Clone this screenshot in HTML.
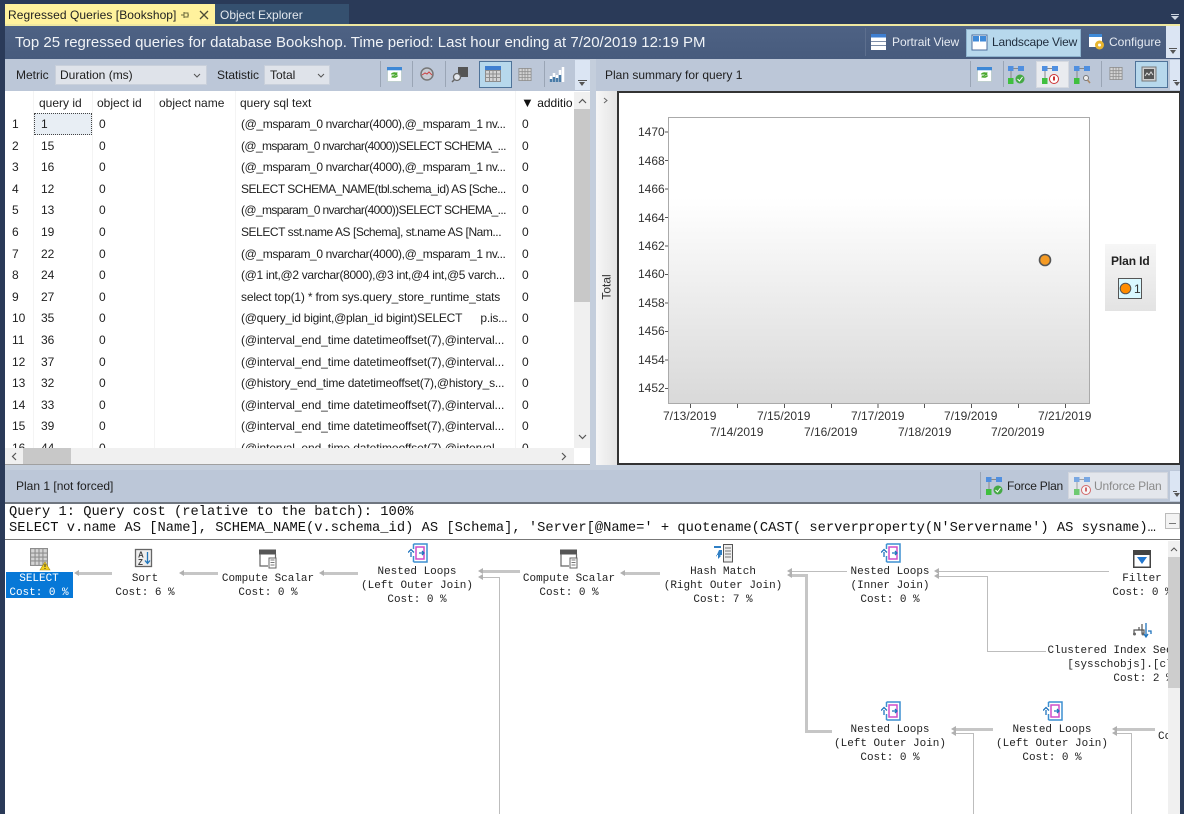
<!DOCTYPE html>
<html><head><meta charset="utf-8"><style>
html,body{margin:0;padding:0;width:1184px;height:814px;overflow:hidden;background:#2a3a58}
*{box-sizing:border-box}
body{font-family:"Liberation Sans",sans-serif;font-size:12px;color:#1e1e1e;position:relative}
.a{position:absolute;white-space:nowrap}
.sep{position:absolute;width:1px;background:#9aa5b5}
.of{position:absolute;background:#dbe5f3}
.of:after{content:"";position:absolute;left:3px;right:3px;bottom:9px;border-top:1px solid #555;height:0}
.of:before{content:"";position:absolute;left:4px;bottom:4px;border:3px solid transparent;border-top:4px solid #555;border-bottom:0}
.r{position:relative;height:21.6px;line-height:21px;overflow:hidden;white-space:nowrap}
.r span{position:absolute;top:0}
.c0{left:7px}.c1{left:36px}.c2{left:94px}.c3{left:236px}.c4{left:517px}
.s1{letter-spacing:-.38px}.s2{letter-spacing:-.62px}.s3{letter-spacing:-.5px}.s4{letter-spacing:-.45px}.s5{letter-spacing:-.33px}.s6{letter-spacing:-.18px}.s7{letter-spacing:-.25px}.s8{letter-spacing:-.1px}.s9{letter-spacing:-.22px}
.m{position:absolute;font-family:"Liberation Mono",monospace;font-size:10.98px;line-height:14px;white-space:pre;text-align:center;color:#222;transform:translateX(-50%)}
.l{position:absolute;background:#bdbdbd}
.k{position:absolute;height:3px;background:#c6c6c6}
.h:before{content:"";position:absolute;left:-5px;top:-2px;border-style:solid;border-width:3.500px 5px 3.500px 0;border-color:transparent #b0b0b0 transparent transparent}
.l.h:before{top:-3px}
.t{position:absolute;font-size:12px;color:#333;white-space:nowrap}
svg.i{position:absolute;overflow:visible}
</style></head><body>
<svg width="0" height="0" style="position:absolute"><defs>
<symbol id="nl" viewBox="0 0 20 20"><path d="M5.5 1h13.5v18h-13.500" fill="#fff" stroke="#3d8fd1" stroke-width="1.500"/><path d="M5.500 1v5M5.500 13v6" stroke="#3d8fd1" stroke-width="1.500"/><path d="M8 4h8v12h-8z" fill="#fff" stroke="#cf4fc9" stroke-width="1.500"/><path d="M0 9.500l3-3 3 3M3 9v5M11 10h5M14 8l2 2-2 2" fill="none" stroke="#1f74bd" stroke-width="1.300"/></symbol>
<symbol id="cs" viewBox="0 0 18 20"><path d="M.5 1h16v4h-16z" fill="#555" stroke="#555"/><path d="M1 5v12h8M16.500 5v4" fill="none" stroke="#666" stroke-width="1.200"/><rect x="10" y="9" width="7" height="10" fill="#fff" stroke="#666"/><path d="M11.500 11h4M11.500 13.500h4M11.500 16h4" stroke="#777"/></symbol>
<symbol id="gr" viewBox="0 0 16 16"><rect x=".5" y=".5" width="15" height="15" fill="#d4d4d4" stroke="#8d8d8d"/><path d="M.5 4.500h15M.5 8h15M.5 11.500h15M4.500 .5v15M8 .5v15M11.500 .5v15" stroke="#8f8f8f"/></symbol>
<symbol id="rf" viewBox="0 0 16 16"><rect x=".5" y=".5" width="15" height="15" fill="#fff" stroke="#bcc"/><rect x="0" y="0" width="16" height="3.500" fill="#3d88d6"/><path d="M4 8a4 3 0 0 1 6-2l1-1v4H7l1.500-1M12 9a4 3 0 0 1-6 2l-1 1V9h4l-1.500 1" fill="#4aa82f"/></symbol>
<symbol id="pl" viewBox="0 0 17 18"><rect x="0" y="0" width="5.500" height="5" fill="#4f8fe0"/><rect x="10" y="0" width="6" height="5" fill="#4f8fe0"/><path d="M5.500 2.500h4.500M3 5v8" stroke="#888"/><rect x="0" y="12" width="5.500" height="6" fill="#3fbf3f"/></symbol>
</defs></svg>

<!-- tabs -->
<div class="a" style="left:5px;top:4px;width:210px;height:21px;background:#fff29d;line-height:22px;padding-left:3px;color:#222;letter-spacing:.06px">Regressed Queries [Bookshop]</div>
<svg class="i" style="left:180px;top:10px" width="10" height="10"><path d="M1 5h3M4 2v6M4 3h4v4H4M8 5h1" stroke="#6b6a3a" fill="none"/></svg>
<svg class="i" style="left:199px;top:10px" width="10" height="10"><path d="M1 1l8 8M9 1l-8 8" stroke="#4d4d36" stroke-width="1.300"/></svg>
<div class="a" style="left:215px;top:4px;width:134px;height:20px;background:#35506f;line-height:22px;padding-left:5px;color:#e3e8ee">Object Explorer</div>
<svg class="i" style="left:1170px;top:14px" width="10" height="6"><path d="M1 0h8v1H1zM1 2h8L5 6z" fill="#cdd5e0"/></svg>
<div class="a" style="left:5px;top:24px;width:1175px;height:2px;background:#efe8a0"></div>

<!-- header -->
<div class="a" style="left:5px;top:26px;width:1175px;height:33px;background:linear-gradient(#4e6284,#475b7d)"></div>
<div class="a" style="left:15px;top:33px;font-size:15px;line-height:20px;color:#f0f3f7">Top 25 regressed queries for database Bookshop. Time period: Last hour ending at 7/20/2019 12:19 PM</div>
<div class="sep" style="left:865px;top:28px;height:28px;background:#5d6f8e"></div>
<svg class="i" style="left:871px;top:34px" width="15" height="16"><rect width="15" height="16" fill="#fff"/><rect width="15" height="3.500" fill="#3f7fd1"/><path d="M0 7.500h15M0 11.500h15" stroke="#7d8ea8"/></svg>
<div class="a" style="left:892px;top:35px;line-height:14px;color:#e6ebf2;letter-spacing:-.05px">Portrait View</div>
<div class="a" style="left:966px;top:29px;width:115px;height:28px;background:#b7d8ec;border:1px solid #8eb4cf"></div>
<svg class="i" style="left:972px;top:35px" width="15" height="15"><rect width="15" height="15" fill="#fff" stroke="#4c6e9c"/><rect x="1" y="1" width="6" height="5.500" fill="#3f8ad8"/><rect x="8" y="1" width="6" height="5.500" fill="#3f8ad8"/></svg>
<div class="a" style="left:992px;top:35px;line-height:14px;color:#1f2d3d;letter-spacing:-.2px">Landscape View</div>
<svg class="i" style="left:1089px;top:34px" width="16" height="16"><rect width="13" height="13" fill="#fff"/><rect width="13" height="3" fill="#3f8ad8"/><circle cx="10.500" cy="11" r="4.500" fill="#e8b52f"/><circle cx="10.500" cy="11" r="1.500" fill="#fff"/></svg>
<div class="a" style="left:1109px;top:35px;line-height:14px;color:#e6ebf2">Configure</div>
<div class="of" style="left:1166px;top:26px;width:14px;height:32px"></div>

<!-- left toolbar -->
<div class="a" style="left:5px;top:59px;width:585px;height:32px;background:#bcc7d8"></div>
<div class="a" style="left:16px;top:68px;line-height:14px">Metric</div>
<div class="a" style="left:55px;top:65px;width:152px;height:20px;background:#dfe3ea;border:1px solid #c9d0db;line-height:18px;padding-left:4px">Duration (ms)</div>
<svg class="i" style="left:193px;top:73px" width="8" height="5"><path d="M1 1l3 3 3-3" stroke="#555" fill="none"/></svg>
<div class="a" style="left:217px;top:68px;line-height:14px">Statistic</div>
<div class="a" style="left:264px;top:65px;width:66px;height:20px;background:#dfe3ea;border:1px solid #c9d0db;line-height:18px;padding-left:5px">Total</div>
<svg class="i" style="left:317px;top:73px" width="8" height="5"><path d="M1 1l3 3 3-3" stroke="#555" fill="none"/></svg>
<div class="sep" style="left:380px;top:61px;height:26px"></div>
<svg class="i" style="left:387px;top:67px" width="15" height="15"><use href="#rf"/></svg>
<div class="sep" style="left:412px;top:61px;height:26px"></div>
<svg class="i" style="left:420px;top:67px" width="14" height="14"><circle cx="7" cy="7" r="6" fill="#c8ccd3" stroke="#777" stroke-width="1.500"/><path d="M2 8l3-2 2 1 2-2 3 3" stroke="#c44" fill="none"/></svg>
<div class="sep" style="left:445px;top:61px;height:26px"></div>
<svg class="i" style="left:452px;top:67px" width="16" height="15"><rect x="6" y="0" width="10" height="10" fill="#555"/><circle cx="5" cy="10" r="3.500" fill="#e4e8ee" stroke="#666" stroke-width="1.300"/><path d="M2.500 12.500L0 15" stroke="#666" stroke-width="1.500"/></svg>
<div class="a" style="left:479px;top:61px;width:33px;height:27px;background:#b7d8ec;border:1px solid #4f7399"></div>
<svg class="i" style="left:485px;top:66px" width="16" height="16"><use href="#gr"/><rect width="16" height="4" fill="#3f7fd1"/></svg>
<svg class="i" style="left:518px;top:68px" width="14" height="13"><use href="#gr"/></svg>
<div class="sep" style="left:544px;top:61px;height:26px"></div>
<svg class="i" style="left:550px;top:67px" width="16" height="15"><path d="M1 15V9M4 15V6M7 15V8M10 15V3M13 15V0" stroke="#fff" stroke-width="2.500"/><path d="M1 15v-3M4 15v-5M7 15v-4M10 15V8" stroke="#4a7ca8" stroke-width="2.500"/></svg>
<div class="of" style="left:575px;top:60px;width:15px;height:30px"></div>

<!-- grid -->
<div class="a" style="left:5px;top:91px;width:585px;height:374px;background:#fff;overflow:hidden">
 <div style="position:absolute;left:0;top:1px;width:569px;height:21px;line-height:22px">
  <span class="a" style="left:34px">query id</span><span class="a" style="left:92px">object id</span><span class="a" style="left:154px">object name</span><span class="a" style="left:235px">query sql text</span><span class="a" style="left:516px;color:#111"><span style="font-size:13px">▼</span> additio</span>
 </div>
 <div style="position:absolute;left:28px;top:0;width:1px;height:357px;background:#f4f4f4"></div>
 <div style="position:absolute;left:87px;top:0;width:1px;height:357px;background:#f4f4f4"></div>
 <div style="position:absolute;left:149px;top:0;width:1px;height:357px;background:#f4f4f4"></div>
 <div style="position:absolute;left:230px;top:0;width:1px;height:357px;background:#f4f4f4"></div>
 <div style="position:absolute;left:510px;top:0;width:1px;height:357px;background:#f4f4f4"></div>
 <div style="position:absolute;left:29px;top:22px;width:58px;height:22px;background:#e8eef4;border:1px dotted #444"></div>
 <div style="position:absolute;left:0;top:23px;width:569px;height:334px;overflow:hidden">
  <div class="r"><span class="c0">1</span><span class="c1">1</span><span class="c2">0</span><span class="c3 s1">(@_msparam_0 nvarchar(4000),@_msparam_1 nv...</span><span class="c4">0</span></div>
  <div class="r"><span class="c0">2</span><span class="c1">15</span><span class="c2">0</span><span class="c3 s2">(@_msparam_0 nvarchar(4000))SELECT SCHEMA_...</span><span class="c4">0</span></div>
  <div class="r"><span class="c0">3</span><span class="c1">16</span><span class="c2">0</span><span class="c3 s1">(@_msparam_0 nvarchar(4000),@_msparam_1 nv...</span><span class="c4">0</span></div>
  <div class="r"><span class="c0">4</span><span class="c1">12</span><span class="c2">0</span><span class="c3 s3">SELECT SCHEMA_NAME(tbl.schema_id) AS [Sche...</span><span class="c4">0</span></div>
  <div class="r"><span class="c0">5</span><span class="c1">13</span><span class="c2">0</span><span class="c3 s2">(@_msparam_0 nvarchar(4000))SELECT SCHEMA_...</span><span class="c4">0</span></div>
  <div class="r"><span class="c0">6</span><span class="c1">19</span><span class="c2">0</span><span class="c3 s4">SELECT sst.name AS [Schema], st.name AS [Nam...</span><span class="c4">0</span></div>
  <div class="r"><span class="c0">7</span><span class="c1">22</span><span class="c2">0</span><span class="c3 s1">(@_msparam_0 nvarchar(4000),@_msparam_1 nv...</span><span class="c4">0</span></div>
  <div class="r"><span class="c0">8</span><span class="c1">24</span><span class="c2">0</span><span class="c3 s5">(@1 int,@2 varchar(8000),@3 int,@4 int,@5 varch...</span><span class="c4">0</span></div>
  <div class="r"><span class="c0">9</span><span class="c1">27</span><span class="c2">0</span><span class="c3 s6">select top(1) * from sys.query_store_runtime_stats</span><span class="c4">0</span></div>
  <div class="r"><span class="c0">10</span><span class="c1">35</span><span class="c2">0</span><span class="c3 s7">(@query_id bigint,@plan_id bigint)SELECT &nbsp; &nbsp; &nbsp;p.is...</span><span class="c4">0</span></div>
  <div class="r"><span class="c0">11</span><span class="c1">36</span><span class="c2">0</span><span class="c3 s8">(@interval_end_time datetimeoffset(7),@interval...</span><span class="c4">0</span></div>
  <div class="r"><span class="c0">12</span><span class="c1">37</span><span class="c2">0</span><span class="c3 s8">(@interval_end_time datetimeoffset(7),@interval...</span><span class="c4">0</span></div>
  <div class="r"><span class="c0">13</span><span class="c1">32</span><span class="c2">0</span><span class="c3 s9">(@history_end_time datetimeoffset(7),@history_s...</span><span class="c4">0</span></div>
  <div class="r"><span class="c0">14</span><span class="c1">33</span><span class="c2">0</span><span class="c3 s8">(@interval_end_time datetimeoffset(7),@interval...</span><span class="c4">0</span></div>
  <div class="r"><span class="c0">15</span><span class="c1">39</span><span class="c2">0</span><span class="c3 s8">(@interval_end_time datetimeoffset(7),@interval...</span><span class="c4">0</span></div>
  <div class="r"><span class="c0">16</span><span class="c1">44</span><span class="c2">0</span><span class="c3 s8">(@interval_end_time datetimeoffset(7),@interval...</span><span class="c4">0</span></div>
 </div>
 <div style="position:absolute;left:569px;top:1px;width:16px;height:356px;background:#f0f0f0"></div>
 <div style="position:absolute;left:569px;top:18px;width:16px;height:193px;background:#c8c8c8"></div>
 <svg class="i" style="left:573px;top:7px" width="9" height="6"><path d="M1 5l3.500-3.500L8 5" stroke="#555" fill="none" stroke-width="1.200"/></svg>
 <svg class="i" style="left:573px;top:343px" width="9" height="6"><path d="M1 1l3.500 3.500L8 1" stroke="#555" fill="none" stroke-width="1.200"/></svg>
 <div style="position:absolute;left:0;top:357px;width:569px;height:16px;background:#f0f0f0"></div>
 <div style="position:absolute;left:18px;top:357px;width:48px;height:16px;background:#c8c8c8"></div>
 <svg class="i" style="left:6px;top:361px" width="6" height="9"><path d="M5 1L1.500 4.500 5 8" stroke="#555" fill="none" stroke-width="1.200"/></svg>
 <svg class="i" style="left:556px;top:361px" width="6" height="9"><path d="M1 1l3.500 3.500L1 8" stroke="#555" fill="none" stroke-width="1.200"/></svg>
 <div style="position:absolute;left:0;top:373px;width:585px;height:1px;background:#a0a0a0"></div>
</div>
<div class="a" style="left:590px;top:59px;width:6px;height:411px;background:#c4cedc"></div>
<div class="a" style="left:5px;top:465px;width:1175px;height:5px;background:#c4cedc"></div>

<!-- right toolbar -->
<div class="a" style="left:596px;top:59px;width:584px;height:32px;background:#bcc7d8"></div>
<div class="a" style="left:605px;top:68px;line-height:14px">Plan summary for query 1</div>
<div class="sep" style="left:970px;top:61px;height:26px"></div>
<svg class="i" style="left:977px;top:67px" width="15" height="15"><use href="#rf"/></svg>
<div class="sep" style="left:1003px;top:61px;height:26px"></div>
<svg class="i" style="left:1008px;top:66px" width="17" height="18"><use href="#pl"/><circle cx="12" cy="13" r="4.500" fill="#45a945"/><path d="M9.500 13l2 2 3-4" stroke="#fff" fill="none"/></svg>
<div class="a" style="left:1036px;top:61px;width:33px;height:27px;background:#e9ebef;border:1px solid #d5d9e0"></div>
<svg class="i" style="left:1042px;top:66px" width="17" height="18"><use href="#pl"/><circle cx="12" cy="13" r="4.500" fill="#fff" stroke="#c33"/><path d="M12 10.500v4" stroke="#c33" stroke-width="2"/></svg>
<svg class="i" style="left:1074px;top:66px" width="17" height="18"><use href="#pl"/><circle cx="12" cy="12" r="2.500" fill="#eee" stroke="#777"/><path d="M13.500 14l2.500 3" stroke="#a86" stroke-width="1.500"/></svg>
<div class="sep" style="left:1101px;top:61px;height:26px"></div>
<svg class="i" style="left:1109px;top:67px" width="14" height="13"><use href="#gr"/></svg>
<div class="a" style="left:1135px;top:61px;width:33px;height:27px;background:#b7d8ec;border:1px solid #4f7399"></div>
<svg class="i" style="left:1142px;top:67px" width="14" height="14"><rect width="14" height="14" fill="#cfcfcf" stroke="#777"/><rect x="2" y="2" width="10" height="10" fill="#555"/><path d="M3 9l2-3 2 2 2-3 2 3" stroke="#ddd" fill="none"/></svg>
<div class="of" style="left:1170px;top:60px;width:10px;height:30px"></div>

<!-- chevron column -->
<div class="a" style="left:596px;top:91px;width:21px;height:374px;background:linear-gradient(90deg,#f7f7f7,#e4e4e4)"></div>
<svg class="i" style="left:603px;top:97px" width="6" height="7"><path d="M1 1l3 2.500L1 6" stroke="#666" fill="none"/></svg>

<!-- chart -->
<div class="a" style="left:617px;top:91px;width:563px;height:374px;background:#fff;border:2px solid #333;border-right:1px solid #333"></div>
<div class="a" style="left:668px;top:117px;width:422px;height:287px;border:1px solid #aaa;background:linear-gradient(#fff 0,#fff 28%,#d9d9d9 100%)"></div>
<svg class="i" style="left:660px;top:117px" width="440" height="300">
<path d="M5 15h3M5 43.500h3M5 72h3M5 100.500h3M5 129h3M5 157.500h3M5 186h3M5 214.500h3M5 243h3M5 271.500h3" stroke="#555"/>
<path d="M30.500 287v4M77.500 287v4M124.500 287v4M171.500 287v4M218 287v4M264.500 287v4M311.500 287v4M358.500 287v4M405.500 287v4" stroke="#555"/>
</svg>
<div class="a" style="left:594px;top:280px;transform:rotate(-90deg);transform-origin:center;color:#333;line-height:14px">Total</div>
<div class="t" style="left:638px;top:125px">1470</div>
<div class="t" style="left:638px;top:154px">1468</div>
<div class="t" style="left:638px;top:182px">1466</div>
<div class="t" style="left:638px;top:211px">1464</div>
<div class="t" style="left:638px;top:239px">1462</div>
<div class="t" style="left:638px;top:267px">1460</div>
<div class="t" style="left:638px;top:296px">1458</div>
<div class="t" style="left:638px;top:324px">1456</div>
<div class="t" style="left:638px;top:353px">1454</div>
<div class="t" style="left:638px;top:381px">1452</div>
<div class="t" style="left:663px;top:409px">7/13/2019</div>
<div class="t" style="left:710px;top:425px">7/14/2019</div>
<div class="t" style="left:757px;top:409px">7/15/2019</div>
<div class="t" style="left:804px;top:425px">7/16/2019</div>
<div class="t" style="left:851px;top:409px">7/17/2019</div>
<div class="t" style="left:898px;top:425px">7/18/2019</div>
<div class="t" style="left:944px;top:409px">7/19/2019</div>
<div class="t" style="left:991px;top:425px">7/20/2019</div>
<div class="t" style="left:1038px;top:409px">7/21/2019</div>
<svg class="i" style="left:1038px;top:253px" width="14" height="14"><circle cx="7" cy="7" r="5.500" fill="#f59a23" stroke="#555" stroke-width="1.600"/></svg>
<div class="a" style="left:1105px;top:244px;width:51px;height:67px;background:linear-gradient(#f6f6f6,#e3e3e3)"></div>
<div class="a" style="left:1111px;top:254px;font-weight:bold;line-height:14px;color:#222;letter-spacing:-.1px">Plan Id</div>
<div class="a" style="left:1118px;top:278px;width:24px;height:21px;background:#d9f8ff;border:1px solid #555"></div>
<svg class="i" style="left:1119px;top:282px" width="13" height="13"><circle cx="6.500" cy="6.500" r="5.300" fill="#ff8c00" stroke="#555"/></svg>
<div class="a" style="left:1134px;top:282px;line-height:14px;color:#333">1</div>

<!-- plan toolbar -->
<div class="a" style="left:5px;top:470px;width:1175px;height:32px;background:#bcc7d8"></div>
<div class="a" style="left:16px;top:479px;line-height:14px">Plan 1 [not forced]</div>
<div class="sep" style="left:980px;top:472px;height:27px"></div>
<svg class="i" style="left:986px;top:477px" width="17" height="18"><use href="#pl"/><circle cx="12" cy="13" r="4.500" fill="#45a945"/><path d="M9.500 13l2 2 3-4" stroke="#fff" fill="none"/></svg>
<div class="a" style="left:1007px;top:479px;line-height:14px;color:#222;letter-spacing:-.2px">Force Plan</div>
<div class="a" style="left:1068px;top:472px;width:100px;height:27px;background:#e3e6ec;border:1px solid #d2d6de"></div>
<svg class="i" style="left:1074px;top:477px" width="17" height="18" opacity=".7"><use href="#pl"/><circle cx="12" cy="13" r="4.500" fill="#fff" stroke="#c33"/><path d="M12 10.500v4" stroke="#c33" stroke-width="2"/></svg>
<div class="a" style="left:1094px;top:479px;line-height:14px;color:#8b8b8b;letter-spacing:-.15px">Unforce Plan</div>
<div class="of" style="left:1170px;top:471px;width:10px;height:30px"></div>
<div class="a" style="left:5px;top:502px;width:1175px;height:2px;background:#6f7680"></div>

<!-- plan -->
<div class="a" style="left:5px;top:504px;width:1175px;height:310px;background:#fff;overflow:hidden"></div>
<div class="a" style="left:9px;top:505px;font-family:'Liberation Mono',monospace;font-size:13.750px;line-height:16px;color:#111;width:1155px;overflow:hidden">Query 1: Query cost (relative to the batch): 100%<br>SELECT v.name AS [Name], SCHEMA_NAME(v.schema_id) AS [Schema], 'Server[@Name=' + quotename(CAST( serverproperty(N'Servername') AS sysname)…</div>
<div class="a" style="left:1165px;top:513px;width:15px;height:16px;background:#f3f3f3;border:1px solid #bbb"></div>
<div class="a" style="left:1169px;top:523px;width:7px;height:1px;background:#777"></div>
<div class="a" style="left:5px;top:539px;width:1175px;height:1px;background:#777"></div>

<div class="a" style="left:5px;top:540px;width:1163px;height:274px;overflow:hidden">
 <div class="a" style="left:1px;top:32px;width:67px;height:26px;background:#0778d7"></div>
 <div class="m" style="left:34px;top:32px;color:#fff">SELECT
Cost: 0 %</div>
 <div class="m" style="left:140px;top:32px">Sort
Cost: 6 %</div>
 <div class="m" style="left:263px;top:32px">Compute Scalar
Cost: 0 %</div>
 <div class="m" style="left:412px;top:25px">Nested Loops
(Left Outer Join)
Cost: 0 %</div>
 <div class="m" style="left:564px;top:32px">Compute Scalar
Cost: 0 %</div>
 <div class="m" style="left:718px;top:25px">Hash Match
(Right Outer Join)
Cost: 7 %</div>
 <div class="m" style="left:885px;top:25px">Nested Loops
(Inner Join)
Cost: 0 %</div>
 <div class="m" style="left:1137px;top:32px">Filter
Cost: 0 %</div>
 <div class="m" style="left:1138px;top:104px">Clustered Index Seek (OBJECT)
[sysschobjs].[clst] [o]
Cost: 2 %</div>
 <div class="m" style="left:885px;top:183px">Nested Loops
(Left Outer Join)
Cost: 0 %</div>
 <div class="m" style="left:1047px;top:183px">Nested Loops
(Left Outer Join)
Cost: 0 %</div>
 <div class="m" style="left:1153px;top:190px;transform:none">Compute</div>

 <!-- connectors -->
 <div class="k h" style="left:74px;top:32px;width:33px"></div>
 <div class="k h" style="left:179px;top:32px;width:34px"></div>
 <div class="k h" style="left:319px;top:32px;width:34px"></div>
 <div class="k h" style="left:478px;top:30px;width:37px"></div>
 <div class="k h" style="left:620px;top:32px;width:35px"></div>
 <div class="l h" style="left:478px;top:37px;width:17px;height:1px"></div>
 <div class="l" style="left:494px;top:37px;width:1px;height:240px"></div>
 <div class="l h" style="left:787px;top:31px;width:55px;height:1px"></div>
 <div class="k h" style="left:787px;top:34px;width:16px"></div>
 <div class="k" style="left:800px;top:34px;width:3px;height:158px"></div>
 <div class="k" style="left:800px;top:190px;width:27px"></div>
 <div class="l h" style="left:934px;top:31px;width:170px;height:1px"></div>
 <div class="l h" style="left:934px;top:36px;width:49px;height:1px"></div>
 <div class="l" style="left:982px;top:36px;width:1px;height:76px"></div>
 <div class="l" style="left:982px;top:111px;width:59px;height:1px"></div>
 <div class="k h" style="left:951px;top:188px;width:37px"></div>
 <div class="l h" style="left:951px;top:193px;width:18px;height:1px"></div>
 <div class="l" style="left:968px;top:193px;width:1px;height:81px"></div>
 <div class="k h" style="left:1112px;top:188px;width:38px"></div>
 <div class="l h" style="left:1112px;top:193px;width:15px;height:1px"></div>
 <div class="l" style="left:1126px;top:193px;width:1px;height:81px"></div>

 <!-- icons -->
 <svg class="i" style="left:25px;top:8px" width="20" height="20"><use href="#gr" width="18" height="18"/><path d="M15 14l5 8H10z" fill="#f2cf1f" stroke="#a88a12" stroke-width=".6"/><path d="M15 16v3M15 20v1" stroke="#333"/></svg>
 <svg class="i" style="left:130px;top:9px" width="17" height="18"><rect x=".5" y=".5" width="16" height="17" fill="#eee" stroke="#666" stroke-width="1.300"/><text x="3" y="8.500" font-size="8" font-weight="bold" font-family="Liberation Sans" fill="#444">A</text><text x="3" y="16" font-size="8" font-weight="bold" font-family="Liberation Sans" fill="#444">Z</text><path d="M12.500 3v11M10 11.500l2.500 3 2.500-3" stroke="#2277bb" fill="none" stroke-width="1.300"/></svg>
 <svg class="i" style="left:254px;top:9px" width="18" height="20"><use href="#cs"/></svg>
 <svg class="i" style="left:403px;top:3px" width="20" height="20"><use href="#nl"/></svg>
 <svg class="i" style="left:555px;top:9px" width="18" height="20"><use href="#cs"/></svg>
 <svg class="i" style="left:709px;top:4px" width="19" height="19"><rect x="9.500" y=".5" width="9" height="17.500" fill="#eee" stroke="#555"/><path d="M11 4h6M11 7h6M11 10h6M11 13h6" stroke="#777"/><path d="M0 2h7v2H0zM5 6h3v5H2v2" fill="#2f7fc4"/><path d="M4 9v6l3-3z" fill="#2f7fc4"/></svg>
 <svg class="i" style="left:876px;top:3px" width="20" height="20"><use href="#nl"/></svg>
 <svg class="i" style="left:1128px;top:10px" width="18" height="18"><rect x=".75" y=".75" width="16.500" height="16.500" fill="#fff" stroke="#444" stroke-width="1.500"/><rect x="1" y="1" width="16" height="4" fill="#444"/><path d="M4 7h10l-5 7z" fill="#2277d0"/></svg>
 <svg class="i" style="left:1128px;top:83px" width="20" height="18"><path d="M1 12V7h5v-3M6 7h5v5M9 1v10" stroke="#555" fill="none" stroke-width="1.200"/><circle cx="1.500" cy="11" r="1.500" fill="#666"/><circle cx="10" cy="11" r="1.500" fill="#666"/><path d="M13 0v13M11 11l2 3 2-3M15 8h3v3" stroke="#1f74bd" fill="none" stroke-width="1.300"/></svg>
 <svg class="i" style="left:876px;top:161px" width="20" height="20"><use href="#nl"/></svg>
 <svg class="i" style="left:1038px;top:161px" width="20" height="20"><use href="#nl"/></svg>
</div>
<!-- plan scrollbar -->
<div class="a" style="left:1168px;top:541px;width:12px;height:273px;background:#f0f0f0"></div>
<div class="a" style="left:1168px;top:557px;width:12px;height:131px;background:#cdcdcd"></div>
<svg class="i" style="left:1170px;top:547px" width="8" height="6"><path d="M1 4l3-3 3 3" stroke="#555" fill="none"/></svg>
</body></html>
